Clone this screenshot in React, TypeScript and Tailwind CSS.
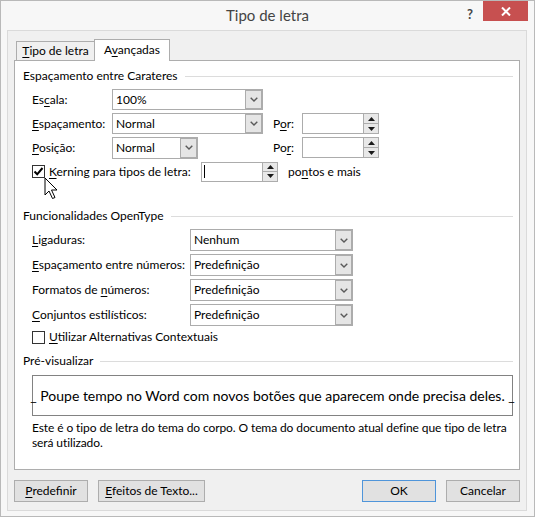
import React from "react";

const font = "font-['Lato','Noto_Sans',sans-serif]";

function U({ children }: { children: React.ReactNode }) {
  return <span className="underline decoration-1 underline-offset-2">{children}</span>;
}

function Chevron() {
  return (
    <svg width="8" height="5" viewBox="0 0 8 5" className="block">
      <path d="M0.7 0.7 L4 4 L7.3 0.7" fill="none" stroke="#5a5a5a" strokeWidth="1.4" />
    </svg>
  );
}

function Combo({ value, className }: { value: string; className: string }) {
  return (
    <div className={"flex border border-[#acacac] bg-white " + className}>
      <div className="flex flex-1 items-center pl-[3px]">{value}</div>
      <div className="flex w-[17px] items-center justify-center border border-[#acacac] bg-[#e5e5e5]">
        <Chevron />
      </div>
    </div>
  );
}

function Spin({ className, caret }: { className: string; caret?: boolean }) {
  return (
    <div className={"flex border border-[#acacac] bg-white " + className}>
      <div className="flex flex-1 items-center pl-[2px]">
        {caret && <div className="h-[13px] w-px bg-black" />}
      </div>
      <div className="flex w-[15px] flex-col border-l border-[#acacac]">
        <div className="flex flex-1 items-center justify-center border-b border-[#acacac] bg-[#e8e8e8]">
          <svg width="7" height="4" viewBox="0 0 7 4">
            <path d="M0 4 L3.5 0 L7 4 Z" fill="#1a1a1a" />
          </svg>
        </div>
        <div className="flex flex-1 items-center justify-center bg-[#e8e8e8]">
          <svg width="7" height="4" viewBox="0 0 7 4">
            <path d="M0 0 L3.5 4 L7 0 Z" fill="#1a1a1a" />
          </svg>
        </div>
      </div>
    </div>
  );
}

function Checkbox({ checked }: { checked?: boolean }) {
  return (
    <div className="flex h-[13px] w-[13px] shrink-0 items-center justify-center border border-[#333] bg-white">
      {checked && (
        <svg width="11" height="11" viewBox="0 0 11 11">
          <path d="M1.5 5.5 L4.2 8.3 L9.5 2" fill="none" stroke="#000" strokeWidth="2" />
        </svg>
      )}
    </div>
  );
}

function SectionHeader({ title }: { title: string }) {
  return (
    <div className="flex h-4 items-center">
      <span className="whitespace-nowrap">{title}</span>
      <div className="ml-[7px] h-px flex-1 bg-[#dcdcdc]" />
    </div>
  );
}

function Button({ children, className }: { children: React.ReactNode; className: string }) {
  return (
    <div className={"flex h-[22px] items-center justify-center border bg-[#e1e1e1] " + className}>
      {children}
    </div>
  );
}

export default function App() {
  return (
    <div
      className={`relative flex h-[517px] w-[535px] flex-col whitespace-nowrap border border-[#b9b9b9] bg-[#f7f7f7] text-[12px] text-black ${font}`}
    >
      {/* title bar */}
      <div className="flex h-[29px]">
        <div className="flex-1" />
        <div className="pt-[3px] text-[15px] text-[#444]">Tipo de letra</div>
        <div className="flex flex-1 justify-end">
          <div className="mr-[10px] mt-[4px] text-[13px] font-bold text-[#444]">?</div>
          <div className="mr-[6px] flex h-[20px] w-[45px] items-center justify-center bg-[#c75050]">
            <svg width="10" height="9" viewBox="0 0 10 9">
              <path d="M1 0.5 L9 8.5 M9 0.5 L1 8.5" stroke="#fff" strokeWidth="2" />
            </svg>
          </div>
        </div>
      </div>

      {/* client area */}
      <div className="mb-[5px] ml-[6px] mr-[7px] flex flex-1 flex-col border border-[#dadada] bg-[#f0f0f0]">
        {/* tabs */}
        <div className="relative z-10 mt-[8px] flex h-[21px] items-end pl-[8px]">
          <div className="flex h-[19px] w-[78px] items-center justify-center border-l border-t border-[#adadad] bg-[#f0f0f0]">
            <span>
              <U>T</U>ipo de letra
            </span>
          </div>
          <div className="-mb-px flex h-[22px] w-[76px] items-center justify-center border-x border-t border-[#adadad] bg-white pb-[2px]">
            <span>
              A<U>v</U>ançadas
            </span>
          </div>
        </div>

        {/* tab panel */}
        <div className="mx-[6px] flex h-[410px] flex-col border border-[#adadad] bg-white pl-[8px] pr-[6px]">
          <div className="mt-[7px]">
            <SectionHeader title="Espaçamento entre Carateres" />
          </div>

          <div className="ml-[9px] mt-[5px] flex flex-col gap-[3px]">
            <div className="flex h-[21px] items-center">
              <div className="w-[80px]">
                Es<U>c</U>ala:
              </div>
              <Combo value="100%" className="h-[21px] w-[151px]" />
            </div>
            <div className="flex h-[21px] items-center">
              <div className="w-[80px]">
                <U>E</U>spaçamento:
              </div>
              <Combo value="Normal" className="h-[21px] w-[151px]" />
              <div className="ml-[10px] w-[29px]">
                P<U>o</U>r:
              </div>
              <Spin className="h-[21px] w-[77px]" />
            </div>
            <div className="flex h-[21px] items-center">
              <div className="w-[80px]">
                <U>P</U>osição:
              </div>
              <div className="w-[151px]">
                <Combo value="Normal" className="h-[22px] w-[86px]" />
              </div>
              <div className="ml-[10px] w-[29px]">
                Po<U>r</U>:
              </div>
              <Spin className="h-[21px] w-[77px]" />
            </div>
            <div className="flex h-[21px] items-center">
              <Checkbox checked />
              <div className="ml-[4px] w-[152px]">
                <U>K</U>erning para tipos de letra:
              </div>
              <Spin caret className="h-[20px] w-[77px]" />
              <div className="ml-[10px]">
                po<U>n</U>tos e mais
              </div>
            </div>
          </div>

          <div className="mt-[26px]">
            <SectionHeader title="Funcionalidades OpenType" />
          </div>

          <div className="ml-[9px] mt-[5px] flex flex-col gap-[3px]">
            <div className="flex h-[22px] items-center">
              <div className="w-[158px]">
                <U>L</U>igaduras:
              </div>
              <Combo value="Nenhum" className="h-[22px] w-[163px]" />
            </div>
            <div className="flex h-[22px] items-center">
              <div className="w-[158px]">
                <U>E</U>spaçamento entre números:
              </div>
              <Combo value="Predefinição" className="h-[22px] w-[163px]" />
            </div>
            <div className="flex h-[22px] items-center">
              <div className="w-[158px]">
                Formatos de <U>n</U>úmeros:
              </div>
              <Combo value="Predefinição" className="h-[22px] w-[163px]" />
            </div>
            <div className="flex h-[22px] items-center">
              <div className="w-[158px]">
                <U>C</U>onjuntos estilísticos:
              </div>
              <Combo value="Predefinição" className="h-[22px] w-[163px]" />
            </div>
            <div className="flex h-[16px] items-center">
              <Checkbox />
              <div className="ml-[4px]">
                <U>U</U>tilizar Alternativas Contextuais
              </div>
            </div>
          </div>

          <div className="mt-[8px]">
            <SectionHeader title="Pré-visualizar" />
          </div>

          <div className="ml-[9px] mt-[6px] flex h-[41px] items-center justify-center border border-[#828282] text-[14px]">
            _ Poupe tempo no Word com novos botões que aparecem onde precisa deles. _
          </div>

          <div className="ml-[9px] mt-[4px] leading-[15px] tracking-[-0.1px]">
            Este é o tipo de letra do tema do corpo. O tema do documento atual define que tipo de letra
            <br />
            será utilizado.
          </div>
        </div>

        {/* buttons */}
        <div className="mt-[10px] flex justify-between px-[6px]">
          <div className="flex gap-[10px]">
            <Button className="w-[74px] border-[#adadad]">
              <span>
                <U>P</U>redefinir
              </span>
            </Button>
            <Button className="w-[107px] border-[#adadad]">
              <span>
                <U>E</U>feitos de Texto...
              </span>
            </Button>
          </div>
          <div className="flex gap-[10px]">
            <Button className="w-[74px] border-[#4f95da]">OK</Button>
            <Button className="w-[74px] border-[#adadad]">Cancelar</Button>
          </div>
        </div>
      </div>

      {/* mouse pointer */}
      <svg
        className="absolute left-[43px] top-[176px]"
        width="14"
        height="24"
        viewBox="0 0 14 24"
      >
        <path
          d="M1 1 L1 18 L5 14 L8.5 21.5 L11 20.5 L7.5 13 L13 13 Z"
          fill="#fff"
          stroke="#000"
          strokeWidth="1"
          strokeLinejoin="miter"
        />
      </svg>
    </div>
  );
}
